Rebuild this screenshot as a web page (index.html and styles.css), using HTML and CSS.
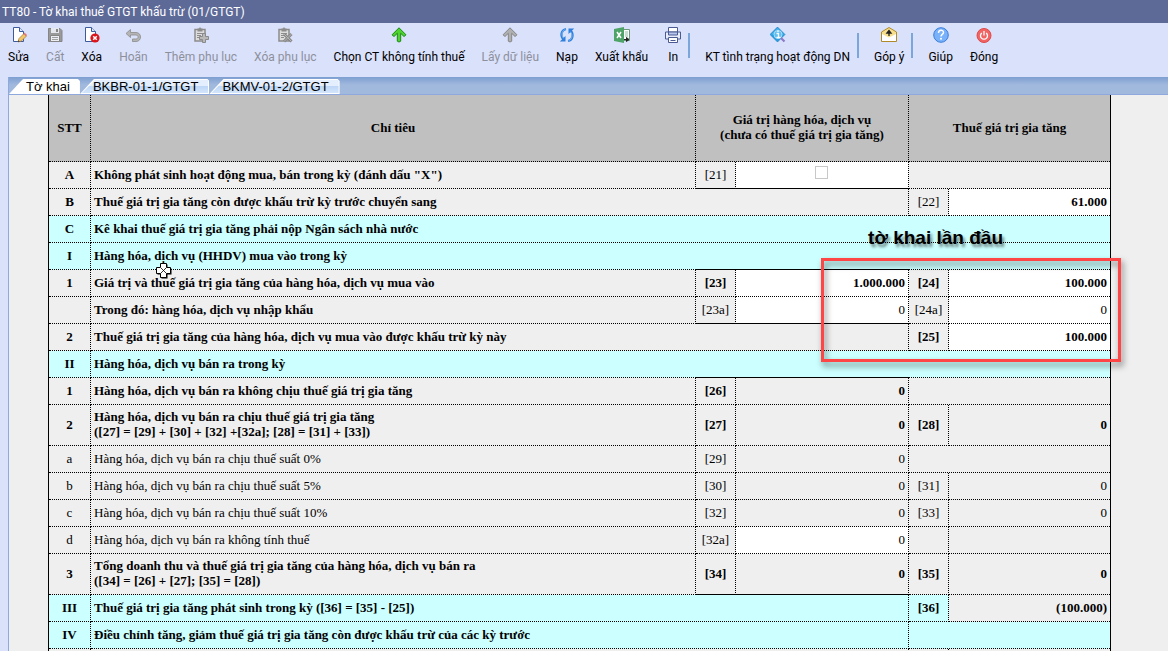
FILE: index.html
```html
<!DOCTYPE html>
<html lang="vi">
<head>
    <meta charset="UTF-8">
    <meta name="viewport" content="width=device-width, initial-scale=1.0">
    <title>TT80 - Tờ khai thuế GTGT khấu trừ (01/GTGT)</title>
    <link rel="stylesheet" href="styles.css">
</head>
<body>
    <header class="title-bar">TT80 - Tờ khai thuế GTGT khấu trừ (01/GTGT)</header>

    <!-- Toolbar -->
    <nav class="toolbar">
        <button class="tool">
            <svg class="icon" viewBox="0 0 16 16"><path d="M2.500.5h6l4 4v10h-10z" fill="#fff" stroke="#3d5a9c"/><path d="M8.500.5v4h4" fill="#dfe8fa" stroke="#3d5a9c"/><path d="M7 15l1-3.500 5-5 2.500 2.500-5 5z" fill="#f3c766" stroke="#9a7444" stroke-width=".7"/><path d="M12.500 7l1-1.500 2.500 2.500-1.200 1.200z" fill="#e07878"/><path d="M7 15l.5-1.800 1.300 1.200z" fill="#333"/></svg>
            <span>Sửa</span>
        </button>
        <button class="tool" disabled>
            <svg class="icon" viewBox="0 0 16 16"><path d="M1.500 1.500h11.500l2 2v11h-13.500z" fill="#9a9a9a" stroke="#858585"/><path d="M4 1h8v5h-8z" fill="#e6e8ef"/><path d="M9 2h2v3h-2z" fill="#858585"/><path d="M3.500 8.500h9v6h-9z" fill="#eceef5" stroke="#858585"/><path d="M5 10.500h6M5 12.500h6" stroke="#a0a0a0"/></svg>
            <span>Cất</span>
        </button>
        <button class="tool">
            <svg class="icon" viewBox="0 0 16 16"><path d="M1.500.5h6l4 4v10h-10z" fill="#fff" stroke="#3d5a9c"/><path d="M7.500.5v4h4" fill="#dfe8fa" stroke="#3d5a9c"/><circle cx="11" cy="11" r="4.600" fill="#d9141b"/><path d="M9.200 9.200l3.600 3.600M12.800 9.200l-3.600 3.600" stroke="#fff" stroke-width="1.500"/></svg>
            <span>Xóa</span>
        </button>
        <button class="tool" disabled>
            <svg class="icon" viewBox="0 0 16 16"><path d="M5.500 2.500l-4.500 4 4.500 4v-2.500h5c3.500 0 3.500 4 0 4h-3v2.500h3.500c6 0 6-9 0-9h-5.500z" fill="#b5b5b5" stroke="#8a8a8a" stroke-width=".8"/></svg>
            <span>Hoãn</span>
        </button>
        <button class="tool" disabled>
            <svg class="icon" viewBox="0 0 16 16"><path d="M2 2.500h10v11.500h-10z" fill="#ddd" stroke="#8c8c8c" stroke-width="1.500"/><path d="M4.500 1.500h1.500l1-1.500 1 1.500h1.500v3h-5z" fill="#8c8c8c"/><path d="M4 6.500h6M4 8.500h4M4 10.500h3" stroke="#8c8c8c"/><path d="M9.500 6.500h3v3h3v3h-3v3h-3v-3h-3v-3h3z" fill="#b9b9b9" stroke="#8a8a8a"/></svg>
            <span>Thêm phụ lục</span>
        </button>
        <button class="tool" disabled>
            <svg class="icon" viewBox="0 0 16 16"><path d="M2 2.500h10v11.500h-10z" fill="#ddd" stroke="#8c8c8c" stroke-width="1.500"/><path d="M4.500 1.500h1.500l1-1.500 1 1.500h1.500v3h-5z" fill="#8c8c8c"/><path d="M4 6.500h6M4 8.500h4M4 10.500h3" stroke="#8c8c8c"/><path d="M7 7l7.500 7.500M14.500 7l-7.500 7.500" stroke="#888" stroke-width="3"/><path d="M7 7l7.500 7.500M14.500 7l-7.500 7.500" stroke="#b5b5b5"/></svg>
            <span>Xóa phụ lục</span>
        </button>
        <button class="tool">
            <svg class="icon" viewBox="0 0 16 16"><path d="M8 .8l7 7-2 1.700-3.300-3.200v7.900l-1.700.8-1.700-.8v-7.900l-3.300 3.200-2-1.700z" fill="#4fd32f" stroke="#188a12"/></svg>
            <span>Chọn CT không tính thuế</span>
        </button>
        <button class="tool" disabled>
            <svg class="icon" viewBox="0 0 16 16"><path d="M8 .8l7 7-2 1.700-3.300-3.200v7.900l-1.700.8-1.700-.8v-7.900l-3.300 3.200-2-1.700z" fill="#b0b0b0" stroke="#858585"/></svg>
            <span>Lấy dữ liệu</span>
        </button>
        <button class="tool">
            <svg class="icon" viewBox="0 0 16 16"><path d="M7 2c-5 1-6 7-2.500 10.500M9 14c5-1 6-7 2.500-10.500" fill="none" stroke="#2f7fdc" stroke-width="2.200"/><path d="M.8 14.500h5.700v-5.500zM15.200 1.500h-5.700v5.500z" fill="#2f7fdc"/><path d="M6.500 2.300c-4 1.200-4.500 6-2 9M9.500 13.700c4-1.200 4.500-6 2-9" fill="none" stroke="#7fbcf8" stroke-width=".8"/></svg>
            <span>Nạp</span>
        </button>
        <button class="tool">
            <svg class="icon" viewBox="0 0 16 16"><path d="M9 2.500h6.500v11h-6.500z" fill="#fff" stroke="#6b9a78"/><path d="M11 5h3M11 7h3M11 9h3" stroke="#8fbf9d"/><path d="M0 2l10-2v16l-10-2z" fill="#4ea368"/><path d="M3 5l4 6M7 5l-4 6" stroke="#fff" stroke-width="1.500"/><path d="M10 12.500h3.500M12.500 10.500l2.500 2-2.500 2z" fill="#222" stroke="#222"/></svg>
            <span>Xuất khẩu</span>
        </button>
        <button class="tool">
            <svg class="icon" viewBox="0 0 16 16"><path d="M3.500.5h9v5h-9z" fill="#fff" stroke="#4c5a94"/><path d="M.5 5h15v7h-15z" fill="#e8edfc" stroke="#4c5a94"/><path d="M3.500 5h9v3h-9z" fill="#b7c5ec" stroke="#4c5a94"/><path d="M3.500 10.500h9v5h-9z" fill="#fff" stroke="#4c5a94"/><path d="M5.500 13.500h5" stroke="#4c5a94"/></svg>
            <span>In</span>
        </button>
        <span class="separator"></span>
        <button class="tool">
            <svg class="icon" viewBox="0 0 16 16"><path d="M7.500 0l7.500 7.500-7.500 7.500-7.500-7.500z" fill="#259fe0" stroke="#1779bd" stroke-width=".6"/><path d="M7.500 1l6.500 6.500h-13z" fill="#4ab4ea"/><circle cx="8" cy="7.500" r="4" fill="#5fbdf0" stroke="#a9defa"/><path d="M6.500 6.500h2v4M6.500 10.500h4M8 3.500v1.500" fill="none" stroke="#fff" stroke-width="1.300"/><path d="M11 11l3.500 3.500" stroke="#8e7ac8" stroke-width="2.200"/></svg>
            <span>KT tình trạng hoạt động DN</span>
        </button>
        <span class="separator"></span>
        <button class="tool">
            <svg class="icon" viewBox="0 0 16 16"><path d="M.5 5l7.500-4.500 7.500 4.500v9.500h-15z" fill="#f8df8d" stroke="#b08a28"/><path d="M1 7l7 3.500 7-3.500v7h-14z" fill="#fff"/><path d="M8 9v-4M6 6l2-2.500 2 2.500z" stroke="#222" stroke-width="1.300" fill="#222"/></svg>
            <span>Góp ý</span>
        </button>
        <span class="separator"></span>
        <button class="tool">
            <svg class="icon" viewBox="0 0 16 16"><circle cx="8" cy="8" r="7.300" fill="#7ab2fa" stroke="#3b7ddb"/><path d="M5.500 6c0-3.500 5-3.500 5-.5 0 1.800-2.500 2-2.500 4" fill="none" stroke="#fff" stroke-width="1.400"/><circle cx="8" cy="11.800" r="1" fill="#fff"/></svg>
            <span>Giúp</span>
        </button>
        <button class="tool">
            <svg class="icon" viewBox="0 0 16 16"><circle cx="8" cy="8.500" r="7" fill="#f26464" stroke="#dc4b4b"/><path d="M5.800 6a3.500 3.500 0 1 0 4.400 0M8 4v4.500" fill="none" stroke="#fff" stroke-width="1.300"/></svg>
            <span>Đóng</span>
        </button>
    </nav>

    <main class="workspace">
        <div class="tabs" role="tablist">
            <button class="tab active" role="tab" aria-selected="true">Tờ khai</button>
            <button class="tab" role="tab" aria-selected="false">BKBR-01-1/GTGT</button>
            <button class="tab" role="tab" aria-selected="false">BKMV-01-2/GTGT</button>
        </div>

        <div class="sheet">
            <table class="form-table">
                <colgroup>
                    <col class="col-stt">
                    <col>
                    <col class="col-code">
                    <col class="col-value">
                    <col class="col-code">
                    <col class="col-tax">
                </colgroup>
                <thead>
                    <tr>
                        <th>STT</th>
                        <th>Chỉ tiêu</th>
                        <th colspan="2">Giá trị hàng hóa, dịch vụ<br>(chưa có thuế giá trị gia tăng)</th>
                        <th colspan="2">Thuế giá trị gia tăng</th>
                    </tr>
                </thead>
                <tbody>
                    <tr class="bold">
                        <td class="stt">A</td>
                        <td>Không phát sinh hoạt động mua, bán trong kỳ (đánh dấu "X")</td>
                        <td class="code light solid">[21]</td>
                        <td class="entry solid"><input type="checkbox" aria-label="[21]"></td>
                        <td colspan="2"></td>
                    </tr>
                    <tr class="bold">
                        <td class="stt">B</td>
                        <td colspan="3">Thuế giá trị gia tăng còn được khấu trừ kỳ trước chuyển sang</td>
                        <td class="code light">[22]</td>
                        <td class="entry"><input type="text" value="61.000" aria-label="[22]"></td>
                    </tr>
                    <tr class="bold section">
                        <td class="stt">C</td>
                        <td colspan="5">Kê khai thuế giá trị gia tăng phải nộp Ngân sách nhà nước</td>
                    </tr>
                    <tr class="bold section">
                        <td class="stt">I</td>
                        <td class="open">Hàng hóa, dịch vụ (HHDV) mua vào trong kỳ</td>
                        <td class="open solid" colspan="2"></td>
                        <td colspan="2"></td>
                    </tr>
                    <tr class="bold">
                        <td class="stt">1</td>
                        <td>Giá trị và thuế giá trị gia tăng của hàng hóa, dịch vụ mua vào</td>
                        <td class="code">[23]</td>
                        <td class="entry"><input type="text" value="1.000.000" aria-label="[23]"></td>
                        <td class="code">[24]</td>
                        <td class="entry"><input type="text" value="100.000" aria-label="[24]"></td>
                    </tr>
                    <tr>
                        <td class="stt"></td>
                        <td class="strong">Trong đó: hàng hóa, dịch vụ nhập khẩu</td>
                        <td class="code solid">[23a]</td>
                        <td class="entry solid"><input type="text" value="0" aria-label="[23a]"></td>
                        <td class="code">[24a]</td>
                        <td class="entry"><input type="text" value="0" aria-label="[24a]"></td>
                    </tr>
                    <tr class="bold">
                        <td class="stt">2</td>
                        <td colspan="3">Thuế giá trị gia tăng của hàng hóa, dịch vụ mua vào được khấu trừ kỳ này</td>
                        <td class="code">[25]</td>
                        <td class="entry"><input type="text" value="100.000" aria-label="[25]"></td>
                    </tr>
                    <tr class="bold section">
                        <td class="stt">II</td>
                        <td class="open">Hàng hóa, dịch vụ bán ra trong kỳ</td>
                        <td class="open solid" colspan="2"></td>
                        <td colspan="2"></td>
                    </tr>
                    <tr class="bold">
                        <td class="stt">1</td>
                        <td>Hàng hóa, dịch vụ bán ra không chịu thuế giá trị gia tăng</td>
                        <td class="code">[26]</td>
                        <td class="value">0</td>
                        <td colspan="2"></td>
                    </tr>
                    <tr class="bold tall">
                        <td class="stt">2</td>
                        <td>Hàng hóa, dịch vụ bán ra chịu thuế giá trị gia tăng<br>([27] = [29] + [30] + [32] +[32a]; [28] = [31] + [33])</td>
                        <td class="code">[27]</td>
                        <td class="value">0</td>
                        <td class="code">[28]</td>
                        <td class="value">0</td>
                    </tr>
                    <tr>
                        <td class="stt">a</td>
                        <td>Hàng hóa, dịch vụ bán ra chịu thuế suất 0%</td>
                        <td class="code">[29]</td>
                        <td class="value">0</td>
                        <td colspan="2"></td>
                    </tr>
                    <tr>
                        <td class="stt">b</td>
                        <td>Hàng hóa, dịch vụ bán ra chịu thuế suất 5%</td>
                        <td class="code">[30]</td>
                        <td class="value">0</td>
                        <td class="code">[31]</td>
                        <td class="value">0</td>
                    </tr>
                    <tr>
                        <td class="stt">c</td>
                        <td>Hàng hóa, dịch vụ bán ra chịu thuế suất 10%</td>
                        <td class="code">[32]</td>
                        <td class="value">0</td>
                        <td class="code">[33]</td>
                        <td class="value">0</td>
                    </tr>
                    <tr>
                        <td class="stt">d</td>
                        <td>Hàng hóa, dịch vụ bán ra không tính thuế</td>
                        <td class="code">[32a]</td>
                        <td class="entry"><input type="text" value="0" aria-label="[32a]"></td>
                        <td></td>
                        <td></td>
                    </tr>
                    <tr class="bold tall">
                        <td class="stt">3</td>
                        <td>Tổng doanh thu và thuế giá trị gia tăng của hàng hóa, dịch vụ bán ra<br>([34] = [26] + [27]; [35] = [28])</td>
                        <td class="code solid">[34]</td>
                        <td class="value solid">0</td>
                        <td class="code">[35]</td>
                        <td class="value">0</td>
                    </tr>
                    <tr class="bold section">
                        <td class="stt">III</td>
                        <td colspan="3">Thuế giá trị gia tăng phát sinh trong kỳ ([36] = [35] - [25])</td>
                        <td class="code">[36]</td>
                        <td class="value plain">(100.000)</td>
                    </tr>
                    <tr class="bold section">
                        <td class="stt">IV</td>
                        <td colspan="3">Điều chỉnh tăng, giảm thuế giá trị gia tăng còn được khấu trừ của các kỳ trước</td>
                        <td colspan="2"></td>
                    </tr>
                    <tr>
                        <td></td>
                        <td colspan="3"></td>
                        <td></td>
                        <td></td>
                    </tr>
                </tbody>
            </table>

            <!-- Notes over the form -->
            <div class="note-text">tờ khai lần đầu</div>
            <div class="note-box"></div>
            <svg class="cursor" viewBox="0 0 16 16"><path d="M5.500 1.500h6v4h4v6h-4v4h-6v-4h-4v-6h4z" fill="#000"/><path d="M4.500.5h6v4h4v6h-4v4h-6v-4h-4v-6h4z" fill="#fff" stroke="#000"/><path d="M5 5l5 5M10 5l-5 5" stroke="#000" stroke-width=".8"/></svg>
        </div>
    </main>
</body>
</html>
```
FILE: styles.css
```css
* {
    box-sizing: border-box;
}
body {
    display: flex;
    flex-direction: column;
    height: 100vh;
    margin: 0;
    overflow: hidden;
    background-color: #dae1fb;
    font-family: Roboto, "Open Sans", sans-serif;
    font-size: 12px;
    color: #000;
}
button {
    margin: 0;
    border: none;
    background: none;
    color: inherit;
    font: inherit;
    white-space: nowrap;
}
.title-bar {
    flex: none;
    height: 23px;
    padding-left: 2px;
    background-color: #5d6a98;
    color: #fff;
    line-height: 24px;
}

/* Toolbar */
.toolbar {
    display: flex;
    flex: none;
    align-items: flex-start;
    height: 54px;
    padding-top: 4px;
}
.tool {
    display: flex;
    flex-direction: column;
    align-items: center;
    gap: 6px;
    padding: 0 9px 0 8px;
    line-height: 17px;
}
.tool:disabled {
    color: #8d909c;
}
.icon {
    width: 16px;
    height: 16px;
}
.separator {
    width: 2px;
    height: 25px;
    margin: 6px 7px 0 -2px;
    background-color: #7ba6dc;
}

/* Tabs */
.workspace {
    display: flex;
    flex: 1;
    flex-direction: column;
    min-height: 0;
    margin-left: 8px;
    border-left: 1px solid #8fa9e0;
}
.tabs {
    display: flex;
    flex: none;
    height: 18px;
    padding-top: 2px;
    border-bottom: 1px solid #90a9dc;
    background: linear-gradient(#7d9fd1, #a2b9de 8px);
}
.tab {
    position: relative;
    z-index: 0;
    padding: 0 11px 0 13px;
    background-color: #fff;
    clip-path: polygon(0 100%, 14px 0, calc(100% - 2px) 0, 100% 2px, 100% 100%);
    font-family: "Liberation Sans", Arial, sans-serif;
    font-size: 13px;
    line-height: 15px;
}
.tab::before {
    content: "";
    position: absolute;
    z-index: -1;
    inset: 1px 1px 1px 2px;
    background: linear-gradient(#e4eefc 50%, #bfd8f7 50%, #d3e5fb);
    clip-path: polygon(0 100%, 13px 0, 100% 0, 100% 100%);
}
.tab.active {
    padding: 0 10px 0 17px;
}
.tab.active::before {
    display: none;
}

/* Form */
.sheet {
    position: relative;
    flex: 1;
    overflow: hidden;
    padding: 0 57px 0 39px;
    background-color: #efefef;
    font-family: "Liberation Serif", "Times New Roman", serif;
    font-size: 13px;
    line-height: 15px;
}
.form-table {
    width: 100%;
    table-layout: fixed;
    border-collapse: separate;
    border-spacing: 0;
    border: solid #000;
    border-width: 0 1px;
}
.col-stt {
    width: 42px;
}
.col-code {
    width: 40px;
}
.col-value {
    width: 173px;
}
.col-tax {
    width: 161px;
}
.form-table th {
    height: 67px;
    padding: 0 0 2px;
    border: dotted #000;
    border-width: 0 1px 1px 0;
    background-color: #c0c0c0;
}
.form-table td {
    height: 27px;
    padding: 0 3px 2px;
    border: dotted #000;
    border-width: 0 1px 1px 0;
}
.form-table tr > :last-child {
    border-right: none;
}
.form-table .tall td {
    height: 41px;
}
.form-table .stt,
.form-table .code {
    padding: 0 0 2px;
    text-align: center;
}
.form-table .value {
    text-align: right;
}
.form-table .open {
    border-right: none;
}
.form-table .solid {
    border-bottom-style: solid;
}
.bold,
.strong {
    font-weight: bold;
}
.light {
    font-weight: normal;
}
.section {
    background-color: #ccffff;
}
.plain {
    background-color: #efefef;
}
.form-table .entry {
    padding: 0;
    background-color: #fff;
}
.entry input[type="text"] {
    display: block;
    width: 100%;
    height: 26px;
    padding: 0 3px;
    border: none;
    outline: none;
    background: none;
    color: inherit;
    font: inherit;
    text-align: right;
}
.entry input[type="checkbox"] {
    appearance: none;
    display: block;
    width: 13px;
    height: 13px;
    margin: 0 auto 5px;
    border: 1px solid #c8c8c8;
    background-color: #fff;
}

/* Notes */
.note-text {
    position: absolute;
    top: 132px;
    right: 165px;
    font-family: "Liberation Sans", Arial, sans-serif;
    font-size: 19px;
    font-weight: bold;
    line-height: 22px;
    text-shadow: 2px 3px 3px rgba(0, 0, 0, 0.5);
}
.note-box {
    position: absolute;
    top: 163px;
    right: 47px;
    width: 300px;
    height: 104px;
    border: 3px solid #ff4545;
    filter: drop-shadow(2px 4px 3px rgba(0, 0, 0, 0.5));
    pointer-events: none;
}
.cursor {
    position: absolute;
    top: 168px;
    left: 147px;
    width: 16px;
    height: 16px;
}
```
